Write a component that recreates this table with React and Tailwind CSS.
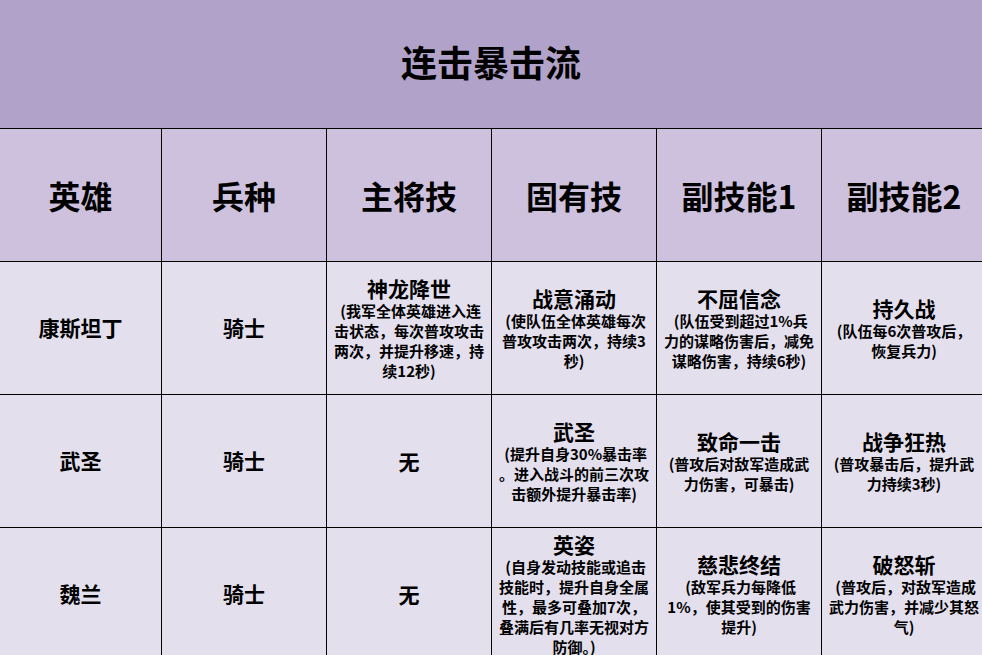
import React from 'react';

const headers = ['英雄', '兵种', '主将技', '固有技', '副技能1', '副技能2'];

const rows = [
  {
    hero: '康斯坦丁',
    troop: '骑士',
    skills: [
      { name: '神龙降世', lines: [' (我军全体英雄进入连', '击状态，每次普攻攻击', '两次，并提升移速，持', '续12秒)'] },
      { name: '战意涌动', lines: [' (使队伍全体英雄每次', '普攻攻击两次，持续3', '秒)'] },
      { name: '不屈信念', lines: [' (队伍受到超过1%兵', '力的谋略伤害后，减免', '谋略伤害，持续6秒)'] },
      { name: '持久战', lines: ['(队伍每6次普攻后，', '恢复兵力)'] },
    ],
  },
  {
    hero: '武圣',
    troop: '骑士',
    skills: [
      { name: '无', lines: [] },
      { name: '武圣', lines: [' (提升自身30%暴击率', '。进入战斗的前三次攻', '击额外提升暴击率)'] },
      { name: '致命一击', lines: ['(普攻后对敌军造成武', '力伤害，可暴击)'] },
      { name: '战争狂热', lines: ['(普攻暴击后，提升武', '力持续3秒)'] },
    ],
  },
  {
    hero: '魏兰',
    troop: '骑士',
    skills: [
      { name: '无', lines: [] },
      { name: '英姿', lines: [' (自身发动技能或追击', '技能时，提升自身全属', '性，最多可叠加7次，', '叠满后有几率无视对方', '防御。)'] },
      { name: '慈悲终结', lines: [' (敌军兵力每降低', '1%，使其受到的伤害', '提升)'] },
      { name: '破怒斩', lines: [' (普攻后，对敌军造成', '武力伤害，并减少其怒', '气)'] },
    ],
  },
];

const font = { fontFamily: '"Noto Sans CJK SC", "Noto Sans", sans-serif' };

function Cell({ first, children, className = '' }) {
  return (
    <div
      className={`${first ? 'w-[162px]' : 'w-[165px]'} shrink-0 h-full border-r border-black flex flex-col items-center justify-center text-center text-black font-bold ${className}`}
    >
      {children}
    </div>
  );
}

export default function App() {
  return (
    <div className="w-[982px] h-[655px] overflow-hidden bg-[#e3dfed]" style={font}>
      {/* 标题 */}
      <div className="h-[129px] bg-[#b1a2c9] border-b border-black flex items-center justify-center pb-[6px]">
        <h1 className="text-[36px] font-bold text-black leading-none">连击暴击流</h1>
      </div>

      {/* 表头 */}
      <div className="h-[133px] flex bg-[#cdc1dd] border-b border-black">
        {headers.map((h, i) => (
          <Cell key={h} first={i === 0} className="text-[32px]">
            {h}
          </Cell>
        ))}
      </div>

      {/* 数据行 */}
      {rows.map((row) => (
        <div key={row.hero} className="h-[133px] flex border-b border-black">
          <Cell first className="text-[21px]">{row.hero}</Cell>
          <Cell className="text-[21px]">{row.troop}</Cell>
          {row.skills.map((s, i) => (
            <Cell key={i}>
              <div className="text-[21px] leading-[26px]">{s.name}</div>
              {s.lines.map((l, j) => (
                <div key={j} className="text-[15px] leading-[20px] whitespace-pre">
                  {l}
                </div>
              ))}
            </Cell>
          ))}
        </div>
      ))}
    </div>
  );
}
